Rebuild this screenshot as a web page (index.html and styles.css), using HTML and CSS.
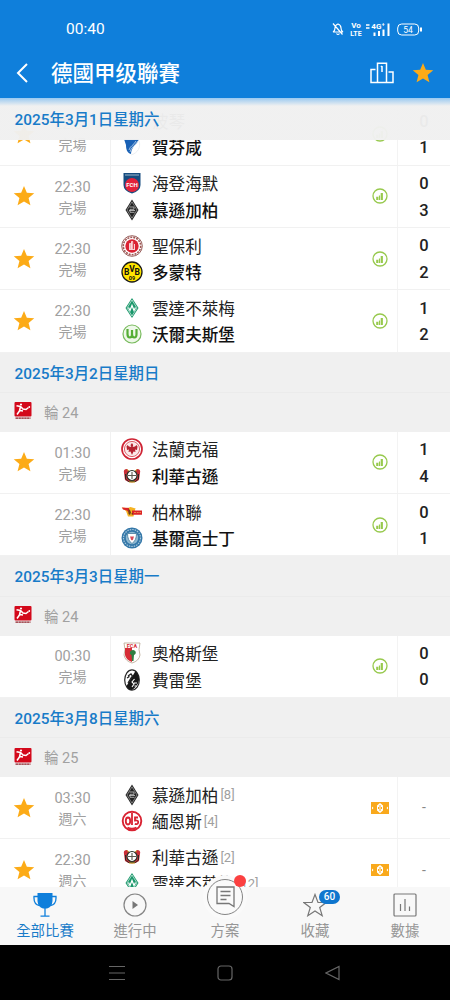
FILE: index.html
```html
<!DOCTYPE html>
<html lang="zh-Hant">
<head>
    <meta charset="UTF-8">
    <meta name="viewport" content="width=device-width, initial-scale=1.0">
    <title>德國甲级聯賽</title>
    <link rel="stylesheet" href="styles.css">
</head>
<body>
    <!-- shared icons and club crests -->
    <svg class="sprite" aria-hidden="true">
        <symbol id="star" viewBox="0 0 24 24"><path fill="#fcab17" d="M12 1l3.1 7.5 8.1.6-6.2 5.2 2 7.9-7-4.3-7 4.3 2-7.9L.8 9.1l8.1-.6z"/></symbol>
        <symbol id="stats" viewBox="0 0 16 16"><g fill="none" stroke="#97c94d"><circle cx="8" cy="8" r="7" stroke-width="1.3"/><path stroke-width="2.2" d="M5.300 12V8.700M9.800 12V5"/><path stroke-width="1.200" d="M7.500 12V7.500"/></g></symbol>
        <symbol id="tip" viewBox="0 0 18 12"><path fill="#f9a91c" d="M0 0h18v12H0z"/><path fill="#fff" d="M1 4.500l1.500 1.500L1 7.500zM17 4.500L15.500 6 17 7.500zM9 1l3 2.400v5.200L9 11 6 8.600V3.400z"/><path fill="none" stroke="#f9a91c" d="M9 3v6M7.500 5v2M10.500 5v2"/></symbol>
        <symbol id="bundesliga" viewBox="0 0 18 18"><rect x=".5" width="17" height="14.500" rx="1" fill="#d3091b"/><path fill="none" stroke="#fff" stroke-width="1.600" d="M2.500 3.700l4 .8 2.500 2.500 3 .5 2.500-2M6.500 4.500L5.500 9l-2.500 3.500M6 8.500l3 .5"/><circle cx="7" cy="2.500" r="1.100" fill="#fff"/><circle cx="15.300" cy="5" r=".9" fill="#fff"/><path stroke="#8c2029" stroke-width="1.300" stroke-dasharray="2.500 .4" d="M1.500 16.200h15"/></symbol>
        <symbol id="hoffenheim" viewBox="0 0 22 22"><path fill="#1961b5" d="M3 3h15c-1 3-3 5-5 7-2 3-3 5-3 8-4-1-5-5-5-9z"/><path fill="none" stroke="#d9e8f7" stroke-width=".7" d="M8 14c1-4 5-5 7-9M9 16c1-5 5-6 8-11"/><path fill="none" stroke="#e4e8ed" stroke-width=".8" d="M18 5c2 6-1 12-8 14"/></symbol>
        <symbol id="heidenheim" viewBox="0 0 22 22"><path fill="#174d80" d="M2.500 1h17v12q0 6-8.500 8.500Q2.500 19 2.500 13z"/><path stroke="#d5e4ed" stroke-width=".7" d="M4 3h14"/><circle cx="11" cy="13" r="7" fill="#e3223a"/><text class="crest-text" x="11" y="15" fill="#fff" font-size="6">FCH</text></symbol>
        <symbol id="gladbach" viewBox="0 0 22 22"><path fill="#222" d="M11 .5L17.500 11 11 21.500 4.500 11z"/><path fill="none" stroke="#bbb" stroke-width=".6" d="M11 2.800L16 11l-5 8.200L6 11z"/><path fill="none" stroke="#ccc" stroke-width=".8" d="M8.500 8h4.500v2.300H9v3h4.500M8 11.500h6"/></symbol>
        <symbol id="stpauli" viewBox="0 0 22 22"><circle cx="11" cy="11" r="10.300" fill="#fff" stroke="#8d4f4c" stroke-width=".9"/><circle cx="11" cy="11" r="8.700" fill="none" stroke="#9f5653" stroke-width="1.600" stroke-dasharray="2 1"/><circle cx="11" cy="11" r="6.700" fill="#db2233"/><path fill="none" stroke="#fff" stroke-width=".8" d="M8 14.500h6M8.500 14V8.500h1.200V14M10.500 14V6.500h1.200V14M13.500 14V9"/></symbol>
        <symbol id="dortmund" viewBox="0 0 22 22"><circle cx="11" cy="11" r="10" fill="#ffe400" stroke="#1b1b16" stroke-width="1.300"/><g class="crest-text" fill="#111"><text x="5.700" y="14" font-size="8.500">B</text><text x="11" y="11" font-size="8.500">V</text><text x="16.300" y="14" font-size="8.500">B</text><text x="11" y="19" font-size="5.500">09</text></g></symbol>
        <symbol id="bremen" viewBox="0 0 22 22"><path fill="#19976a" d="M11 1l6.500 10L11 21 4.500 11z"/><path fill="none" stroke="#fff" stroke-width=".6" d="M11 3L16 11l-5 8-5-8z"/><path fill="none" stroke="#fff" stroke-width="1.300" d="M7.500 10.500l1.500 3L11 8.500l2 5 1.500-3"/></symbol>
        <symbol id="wolfsburg" viewBox="0 0 22 22"><circle cx="11" cy="11" r="9" fill="#eef8e9" stroke="#79bb5e" stroke-width="1.200"/><path fill="none" stroke="#55ae35" stroke-width="2.200" d="M6.500 6v5q0 3.500 2.300 3.500T11 11V7v4q0 3.500 2.300 3.500T15.500 11V6"/></symbol>
        <symbol id="frankfurt" viewBox="0 0 22 22"><circle cx="11" cy="11" r="10" fill="#fff" stroke="#cf2434" stroke-width="1.700"/><circle cx="11" cy="11" r="7.600" fill="#fbe9e9" stroke="#d33c47" stroke-width=".8"/><path fill="#b52330" d="M11 5l1.200 2-.5 2 2.300-.5L15.500 7l1 1.500-.5 3.500-2-.5.500 2.500-2-.5L11 17l-1.500-3.500-2 .5.500-2.500-2 .5-.5-3.500 1-1.500L8 8.500l2.300.5-.8-2z"/></symbol>
        <symbol id="leverkusen" viewBox="0 0 22 22"><path fill="#c92e37" d="M3 8q-1-4 3-4l2 2h6l2-2q4 0 3 4l-1 7q-7 5-14 0z"/><circle cx="11" cy="10.500" r="5" fill="#fff" stroke="#293229" stroke-width="1.200"/><path stroke="#5b594e" stroke-width="1.100" d="M7 10.500h8M11 7v7"/><path fill="none" stroke="#332722" stroke-width="1" d="M4.500 9v5l3 2.500h7l3-2.500V9"/><path stroke="#c8ad2d" d="M6 4.500l2 1.500M16 4.500L14 6M8 17h6"/></symbol>
        <symbol id="union" viewBox="0 0 22 22"><path fill="#f5b322" d="M.5 6.500q6 1 9-.5 4 1.500 5 1l-2 8.500H7L5 10z"/><path fill="#dc2426" d="M1 6.500l7 .5v5L6 9.500 2 8.500zM11 9.500h10v4.300H11z"/><path fill="#694018" d="M7.500 8l1.500 1 1 2.500L9 14l-1.500-1zM10.500 12h1.500l-1 2.500z"/><path stroke="#f3a05a" stroke-width=".8" stroke-dasharray="2 .7" d="M13 11.500h7"/></symbol>
        <symbol id="kiel" viewBox="0 0 22 22"><circle cx="11" cy="11" r="10.500" fill="#3477a8"/><circle cx="11" cy="11" r="8.500" fill="none" stroke="#a7c8dd" stroke-width="1.200" stroke-dasharray="1.500 1"/><circle cx="11" cy="11" r="6.200" fill="#8fb9d2"/><path fill="#fff" stroke="#447b9d" stroke-width=".8" d="M6.500 6.500h9q0 7-4.500 10-4.500-3-4.500-10z"/><path fill="#d84b58" d="M9 9.500h4l-1 3-1 1-1-1z"/></symbol>
        <symbol id="augsburg" viewBox="0 0 22 22"><path fill="#fff" stroke="#b9a590" stroke-width=".8" d="M3 1h16q-2 7 0 12-1 6-8 8-7-2-8-8 2-5 0-12z"/><path fill="#d62c35" d="M4 6h7v14q-6-2-7-7z"/><path fill="#2f7f42" d="M12 8c3 0 4 4 1 5l-.5 6h-1.500l-.5-6C7.500 12 9 8 12 8z"/><text class="crest-text" x="11" y="5.800" font-size="5.500" fill="#d62c35">FCA</text></symbol>
        <symbol id="freiburg" viewBox="0 0 22 22"><ellipse cx="11" cy="11" rx="7.300" ry="10.200" fill="#fff" stroke="#272727" stroke-width="1.200"/><path fill="#171717" d="M14.500 2q4 4 3.500 9t-7 10q-4 0-5.500-4z"/><path fill="none" stroke="#222" stroke-width="1.300" d="M7 7l3-2 1.500 2-1.500 2-3 5M8.500 7.500L6 9"/><path fill="none" stroke="#fff" stroke-width="1.100" d="M13.500 10l-2.500 3 2 2-2 3M13 14h3M13.500 17h2"/></symbol>
        <symbol id="mainz" viewBox="0 0 22 22"><circle cx="11" cy="11" r="9.300" fill="#fff" stroke="#d92332" stroke-width="1.900"/><path fill="none" stroke="#d92332" stroke-width="1.800" d="M11 3v12M6.500 17.500q4.500 2.500 9 0"/><ellipse cx="7" cy="11" rx="2.200" ry="3.500" fill="none" stroke="#d92332" stroke-width="1.800"/><path fill="none" stroke="#d92332" stroke-width="1.800" d="M17 7.500h-3v3q3.500-.5 3.200 2-.4 2.300-3.400 1.300"/></symbol>
    </svg>

    <div class="screen">
        <header class="topbar">
            <div class="status">
                <span>00:40</span>
                <svg class="status-icons" viewBox="0 0 92 16" fill="none" stroke="#fff">
                    <path stroke-width="1.200" d="M1 11q2-1 2-4 0-3 3-4 3 1 3 4t2 4zM4.500 12.500q1.500 2 3 0M1 2.500l9.500 11"/>
                    <g class="crest-text" fill="#fff" stroke="none" font-size="8"><text x="24" y="7.300">Vo</text><text x="24" y="14.500" font-size="7">LTE</text><text x="46" y="7.500" font-size="8">4G⁺</text></g>
                    <path stroke-width="1.500" d="M34 4h3.500M34 7h3.500"/>
                    <path stroke-width="2" d="M42.500 11.500V15M47 10v5M51.500 8.500V15M56.500 2.500V15"/>
                    <rect x="65.700" y="3" width="21" height="11" rx="4"/><path stroke-width="2" d="M89 6.500v4"/>
                    <text x="76" y="11.500" fill="#fff" stroke="none" font-family="Roboto" font-size="8.500" text-anchor="middle">54</text>
                </svg>
            </div>
            <div class="title-row">
                <svg class="back" viewBox="0 0 12 20" fill="none" stroke="#fff" stroke-width="2"><path d="M11 1L2 10l9 9"/></svg>
                <h1>德國甲级聯賽</h1>
                <svg class="podium" viewBox="0 0 24 22" fill="none" stroke="#fff" stroke-width="1.500"><path d="M7.500 20.500V1.200h9v19.300M5.500 7.500H1v13h22V10h-4.500M12 4v6M11 5l1-1"/></svg>
                <svg class="fav"><use href="#star"/></svg>
            </div>
        </header>

        <main class="list">
            <div class="date sticky">2025年3月1日星期六</div>
            <div class="match">
                <svg class="star"><use href="#star"/></svg>
                <div class="when"><span>22:30</span><span>完場</span></div>
                <div class="teams">
                    <div class="team"><svg></svg>波琴</div>
                    <div class="team win"><svg><use href="#hoffenheim"/></svg>賀芬咸</div>
                </div>
                <svg class="info"><use href="#stats"/></svg>
                <div class="score"><span>0</span><span>1</span></div>
            </div>
            <div class="match">
                <svg class="star"><use href="#star"/></svg>
                <div class="when"><span>22:30</span><span>完場</span></div>
                <div class="teams">
                    <div class="team"><svg><use href="#heidenheim"/></svg>海登海默</div>
                    <div class="team win"><svg><use href="#gladbach"/></svg>慕遜加柏</div>
                </div>
                <svg class="info"><use href="#stats"/></svg>
                <div class="score"><span>0</span><span>3</span></div>
            </div>
            <div class="match">
                <svg class="star"><use href="#star"/></svg>
                <div class="when"><span>22:30</span><span>完場</span></div>
                <div class="teams">
                    <div class="team"><svg><use href="#stpauli"/></svg>聖保利</div>
                    <div class="team win"><svg><use href="#dortmund"/></svg>多蒙特</div>
                </div>
                <svg class="info"><use href="#stats"/></svg>
                <div class="score"><span>0</span><span>2</span></div>
            </div>
            <div class="match">
                <svg class="star"><use href="#star"/></svg>
                <div class="when"><span>22:30</span><span>完場</span></div>
                <div class="teams">
                    <div class="team"><svg><use href="#bremen"/></svg>雲達不萊梅</div>
                    <div class="team win"><svg><use href="#wolfsburg"/></svg>沃爾夫斯堡</div>
                </div>
                <svg class="info"><use href="#stats"/></svg>
                <div class="score"><span>1</span><span>2</span></div>
            </div>

            <div class="date">2025年3月2日星期日</div>
            <div class="round"><svg><use href="#bundesliga"/></svg>輪 24</div>
            <div class="match">
                <svg class="star"><use href="#star"/></svg>
                <div class="when"><span>01:30</span><span>完場</span></div>
                <div class="teams">
                    <div class="team"><svg><use href="#frankfurt"/></svg>法蘭克福</div>
                    <div class="team win"><svg><use href="#leverkusen"/></svg>利華古遜</div>
                </div>
                <svg class="info"><use href="#stats"/></svg>
                <div class="score"><span>1</span><span>4</span></div>
            </div>
            <div class="match">
                <svg class="star"></svg>
                <div class="when"><span>22:30</span><span>完場</span></div>
                <div class="teams">
                    <div class="team"><svg><use href="#union"/></svg>柏林聯</div>
                    <div class="team win"><svg><use href="#kiel"/></svg>基爾高士丁</div>
                </div>
                <svg class="info"><use href="#stats"/></svg>
                <div class="score"><span>0</span><span>1</span></div>
            </div>

            <div class="date">2025年3月3日星期一</div>
            <div class="round"><svg><use href="#bundesliga"/></svg>輪 24</div>
            <div class="match">
                <svg class="star"></svg>
                <div class="when"><span>00:30</span><span>完場</span></div>
                <div class="teams">
                    <div class="team"><svg><use href="#augsburg"/></svg>奧格斯堡</div>
                    <div class="team"><svg><use href="#freiburg"/></svg>費雷堡</div>
                </div>
                <svg class="info"><use href="#stats"/></svg>
                <div class="score"><span>0</span><span>0</span></div>
            </div>

            <div class="date">2025年3月8日星期六</div>
            <div class="round"><svg><use href="#bundesliga"/></svg>輪 25</div>
            <div class="match">
                <svg class="star"><use href="#star"/></svg>
                <div class="when"><span>03:30</span><span>週六</span></div>
                <div class="teams">
                    <div class="team"><svg><use href="#gladbach"/></svg>慕遜加柏<small>[8]</small></div>
                    <div class="team"><svg><use href="#mainz"/></svg>緬恩斯<small>[4]</small></div>
                </div>
                <svg class="info tip"><use href="#tip"/></svg>
                <div class="score none">-</div>
            </div>
            <div class="match">
                <svg class="star"><use href="#star"/></svg>
                <div class="when"><span>22:30</span><span>週六</span></div>
                <div class="teams">
                    <div class="team"><svg><use href="#leverkusen"/></svg>利華古遜<small>[2]</small></div>
                    <div class="team"><svg><use href="#bremen"/></svg>雲達不萊梅<small>[12]</small></div>
                </div>
                <svg class="info tip"><use href="#tip"/></svg>
                <div class="score none">-</div>
            </div>
        </main>

        <nav class="tabs">
            <a class="tab active">
                <svg viewBox="0 0 24 24"><path fill="#0f7fdb" d="M4.500 0h15v8q-.5 6-5.500 7.500h-4Q5 14 4.500 8z"/><path fill="none" stroke="#0f7fdb" stroke-width="1.300" d="M5 3.500H1q-.5 8 5.500 9M19 3.500h4q.5 8-5.500 9M12 15v8M7.500 23.200h9"/></svg>
                全部比賽
            </a>
            <a class="tab">
                <svg viewBox="0 0 24 24"><circle cx="12" cy="12" r="11" fill="none" stroke="#858585" stroke-width="1.200"/><path fill="#777" d="M9.500 8l5.500 4-5.500 4z"/></svg>
                進行中
            </a>
            <a class="tab">
                <span class="plan">
                    <svg viewBox="0 0 24 24" fill="none" stroke="#777" stroke-width="1.300"><path d="M4 2h17v19.500L16 18.500H4zM7.500 6.500h10M7.500 10.500h10M7.500 14.500h6"/></svg>
                    <i class="dot"></i>
                </span>
                方案
            </a>
            <a class="tab">
                <svg viewBox="0 0 24 24" fill="none" stroke="#777" stroke-width="1.200"><path d="M12 1.500l3 8h8.200l-6.500 5 2.500 8.200L12 18l-7.200 4.700 2.500-8.200-6.500-5H9z"/></svg>
                <b class="count">60</b>
                收藏
            </a>
            <a class="tab">
                <svg viewBox="0 0 24 24" fill="none" stroke="#777" stroke-width="1.200"><rect x="1" y="1" width="22" height="22" rx="1"/><path d="M7.500 11v7M12 6v12M16.500 13.500V18"/></svg>
                數據
            </a>
        </nav>

        <footer class="sysnav">
            <svg viewBox="0 0 16 16"><path d="M0 1.500h16M0 8h16M0 14.500h16"/></svg>
            <svg viewBox="0 0 16 16"><rect x="1" y="1" width="14" height="14" rx="3"/></svg>
            <svg viewBox="0 0 16 16"><path d="M14 1.500v13L1 8z"/></svg>
        </footer>
    </div>
</body>
</html>
```
FILE: styles.css
```css
* { box-sizing: border-box; }
body { margin: 0; font-family: Roboto, "Noto Sans CJK TC", sans-serif; }
svg { display: block; flex: none; }
.sprite { position: absolute; width: 0; height: 0; }
.crest-text { font-family: Roboto, sans-serif; font-weight: 700; text-anchor: middle; }
.screen { width: 450px; height: 1000px; display: flex; flex-direction: column; overflow: hidden; background: #fff; }

.topbar { height: 98px; flex: none; background: #0f7fdb; color: #fff; }
.status { height: 48px; padding: 10px 26px 0 66px; display: flex; align-items: center; justify-content: space-between; font-size: 15.5px; }
.status-icons { width: 92px; height: 16px; }
.title-row { height: 50px; padding: 0 16px 0 16px; display: flex; align-items: center; }
.back { width: 12px; height: 20px; }
h1 { margin: 0 auto 0 23px; padding-top: 2px; font-size: 21.5px; font-weight: 500; line-height: 30px; }
.podium { width: 24px; height: 22px; margin-right: 18px; }
.fav { width: 22px; height: 22px; }

.list { position: relative; height: 789px; flex: none; padding-top: 5.4px; overflow: hidden; }
.date { height: 40.6px; padding-left: 14.5px; background: #f0f0f0; border-bottom: 1px solid #ebebeb; color: #187bc8; font-size: 15.4px; font-weight: 500; line-height: 43px; }
.sticky { position: absolute; top: 0; left: 0; width: 100%; height: 42px; border: 0; background: linear-gradient(rgba(150,199,240,.97), rgba(240,240,240,.97) 8px); line-height: 45px; }
.round { height: 38.6px; padding: 0 0 2px 14px; display: flex; align-items: center; background: #f0f0f0; color: #a1a1a1; font-size: 14.5px; }
.round svg { width: 18px; height: 18px; margin-right: 12px; }

.match { height: 62.3px; display: grid; grid-template-columns: 48px 62px 252px 35px 53px; align-items: center; border-bottom: 1px solid #f1f1f1; }
.star { width: 22px; height: 22px; justify-self: center; }
.when { display: grid; grid-template-rows: 20px 20px; padding: 2.5px 13px 0 0; text-align: center; line-height: 20px; font-size: 14.5px; color: #a0a0a0; }
.when span + span { font-size: 14px; }
.teams { height: 100%; padding: 4.5px 0 0 10px; border-left: 1px solid #f1f1f1; }
.team { height: 26.4px; display: flex; align-items: center; font-size: 16.6px; color: #222; white-space: nowrap; }
.team svg { width: 22px; height: 22px; margin-right: 9px; }
.team small { margin-left: 2px; font-size: 13px; color: #a0a0a0; }
.win { font-weight: 500; color: #111; }
.info { width: 16px; height: 16px; justify-self: center; }
.tip { width: 18px; height: 12px; }
.score { height: 100%; padding-top: 5.5px; display: flex; flex-direction: column; align-items: center; border-left: 1px solid #f3f3f3; font-size: 16.5px; font-weight: 500; line-height: 26.4px; color: #222; }
.score.none { padding: 0; justify-content: center; font-size: 14px; font-weight: 400; color: #888; }

.tabs { position: relative; height: 58px; flex: none; display: grid; grid-template-columns: repeat(5, 1fr); background: #f8f8f8; }
.tab { position: relative; padding-top: 6px; display: flex; flex-direction: column; align-items: center; font-size: 14.4px; line-height: 30px; color: #969696; }
.tab svg { width: 24px; height: 24px; }
.active { color: #187bc8; }
.plan { position: relative; width: 36px; height: 36px; margin: -14px 0 2px; display: flex; align-items: center; justify-content: center; border: 1.5px solid #858585; border-radius: 50%; background: #fafafa; box-shadow: 0 0 0 4px #fafafa; }
.plan .dot { position: absolute; top: -5px; right: -4px; width: 12px; height: 12px; border-radius: 50%; background: #fb4040; }
.count { position: absolute; top: 3px; left: 49px; width: 21px; height: 14px; border-radius: 7px; background: #0f76ce; color: #fff; font-size: 10px; font-weight: 500; line-height: 14px; text-align: center; }

.sysnav { height: 55px; flex: none; padding: 0 63px; display: grid; grid-template-columns: repeat(3, 1fr); align-items: center; justify-items: center; background: #000; }
.sysnav svg { width: 16px; height: 16px; fill: none; stroke: #666; stroke-width: 1.2; }
```
